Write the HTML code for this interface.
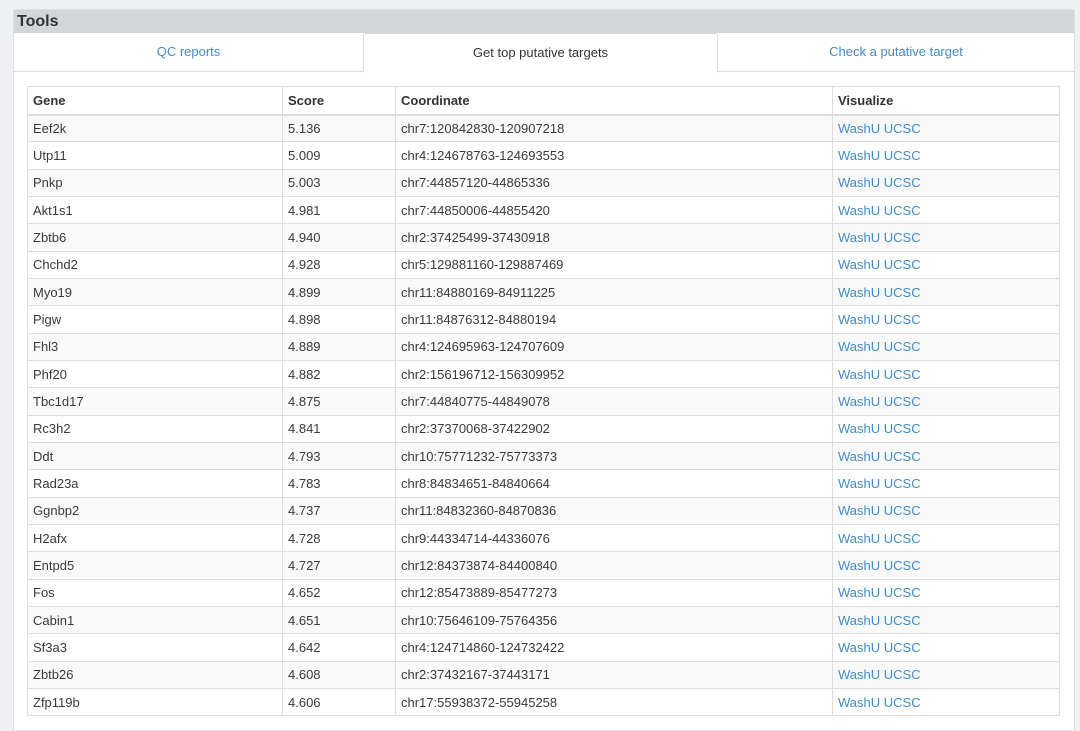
<!DOCTYPE html><html><head><style>
html,body{margin:0;width:1080px;height:713px;overflow:hidden}
body{background:#eff0f3;font-family:"Liberation Sans",sans-serif;font-size:13px;color:#3a3a3a}
.panel{position:absolute;left:13px;top:9px;width:1060px;height:720px;background:#fff;border:1px solid #dde0e3;border-radius:3px}
.hd{height:23px;background:#d3d6d9;font-weight:bold;font-size:16px;color:#333;padding-left:3px;line-height:23px}
.tabs{position:absolute;top:23px;left:0;width:1060px;height:38px;border-bottom:1px solid #ddd}
.tab{position:absolute;top:0;height:38px;line-height:37px;text-align:center;color:#428bca}
.tab.act{background:#fff;border:1px solid #ddd;border-bottom:1px solid #fff;height:38px;color:#333;border-radius:3px 3px 0 0;top:0}
table{position:absolute;left:13px;top:76px;border-collapse:collapse;width:1033px}
td,th{border:1px solid #ddd;padding:0 5px;text-align:left;height:27.33px;box-sizing:border-box}
th{height:28px;border-bottom:2px solid #ddd;color:#333}
tr:nth-child(even) td{background:#f9f9f9}
a{color:#428bca;text-decoration:none}
</style></head><body><div class="panel"><div class="hd">Tools</div>
<div class="tabs"><div class="tab" style="left:0;width:349px">QC reports</div><div class="tab act" style="left:349px;width:353px">Get top putative targets</div><div class="tab" style="left:704px;width:356px">Check a putative target</div></div>
<table><colgroup><col style="width:255px"><col style="width:113px"><col style="width:437px"><col></colgroup>
<tr><th>Gene</th><th>Score</th><th>Coordinate</th><th>Visualize</th></tr>
<tr><td>Eef2k</td><td>5.136</td><td>chr7:120842830-120907218</td><td><a>WashU UCSC</a></td></tr>
<tr><td>Utp11</td><td>5.009</td><td>chr4:124678763-124693553</td><td><a>WashU UCSC</a></td></tr>
<tr><td>Pnkp</td><td>5.003</td><td>chr7:44857120-44865336</td><td><a>WashU UCSC</a></td></tr>
<tr><td>Akt1s1</td><td>4.981</td><td>chr7:44850006-44855420</td><td><a>WashU UCSC</a></td></tr>
<tr><td>Zbtb6</td><td>4.940</td><td>chr2:37425499-37430918</td><td><a>WashU UCSC</a></td></tr>
<tr><td>Chchd2</td><td>4.928</td><td>chr5:129881160-129887469</td><td><a>WashU UCSC</a></td></tr>
<tr><td>Myo19</td><td>4.899</td><td>chr11:84880169-84911225</td><td><a>WashU UCSC</a></td></tr>
<tr><td>Pigw</td><td>4.898</td><td>chr11:84876312-84880194</td><td><a>WashU UCSC</a></td></tr>
<tr><td>Fhl3</td><td>4.889</td><td>chr4:124695963-124707609</td><td><a>WashU UCSC</a></td></tr>
<tr><td>Phf20</td><td>4.882</td><td>chr2:156196712-156309952</td><td><a>WashU UCSC</a></td></tr>
<tr><td>Tbc1d17</td><td>4.875</td><td>chr7:44840775-44849078</td><td><a>WashU UCSC</a></td></tr>
<tr><td>Rc3h2</td><td>4.841</td><td>chr2:37370068-37422902</td><td><a>WashU UCSC</a></td></tr>
<tr><td>Ddt</td><td>4.793</td><td>chr10:75771232-75773373</td><td><a>WashU UCSC</a></td></tr>
<tr><td>Rad23a</td><td>4.783</td><td>chr8:84834651-84840664</td><td><a>WashU UCSC</a></td></tr>
<tr><td>Ggnbp2</td><td>4.737</td><td>chr11:84832360-84870836</td><td><a>WashU UCSC</a></td></tr>
<tr><td>H2afx</td><td>4.728</td><td>chr9:44334714-44336076</td><td><a>WashU UCSC</a></td></tr>
<tr><td>Entpd5</td><td>4.727</td><td>chr12:84373874-84400840</td><td><a>WashU UCSC</a></td></tr>
<tr><td>Fos</td><td>4.652</td><td>chr12:85473889-85477273</td><td><a>WashU UCSC</a></td></tr>
<tr><td>Cabin1</td><td>4.651</td><td>chr10:75646109-75764356</td><td><a>WashU UCSC</a></td></tr>
<tr><td>Sf3a3</td><td>4.642</td><td>chr4:124714860-124732422</td><td><a>WashU UCSC</a></td></tr>
<tr><td>Zbtb26</td><td>4.608</td><td>chr2:37432167-37443171</td><td><a>WashU UCSC</a></td></tr>
<tr><td>Zfp119b</td><td>4.606</td><td>chr17:55938372-55945258</td><td><a>WashU UCSC</a></td></tr>
</table></div></body></html>
